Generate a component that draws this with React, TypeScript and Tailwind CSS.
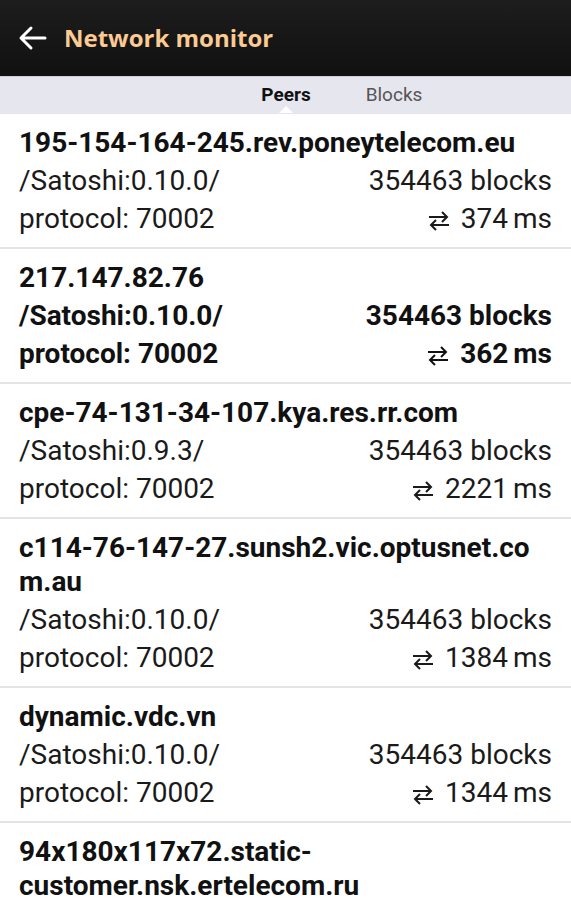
import React from 'react'

type Peer = {
  host: string
  agent?: string
  blocks?: string
  protocol?: string
  ping?: string
  bold?: boolean
  breakAll?: boolean
}

const peers: Peer[] = [
  { host: '195-154-164-245.rev.poneytelecom.eu', agent: '/Satoshi:0.10.0/', blocks: '354463 blocks', protocol: 'protocol: 70002', ping: '374' },
  { host: '217.147.82.76', agent: '/Satoshi:0.10.0/', blocks: '354463 blocks', protocol: 'protocol: 70002', ping: '362', bold: true },
  { host: 'cpe-74-131-34-107.kya.res.rr.com', agent: '/Satoshi:0.9.3/', blocks: '354463 blocks', protocol: 'protocol: 70002', ping: '2221' },
  { host: 'c114-76-147-27.sunsh2.vic.optusnet.com.au', agent: '/Satoshi:0.10.0/', blocks: '354463 blocks', protocol: 'protocol: 70002', ping: '1384', breakAll: true },
  { host: 'dynamic.vdc.vn', agent: '/Satoshi:0.10.0/', blocks: '354463 blocks', protocol: 'protocol: 70002', ping: '1344' },
  { host: '94x180x117x72.static-customer.nsk.ertelecom.ru' },
]

function SwapIcon() {
  return (
    <svg width="24" height="22" viewBox="0 0 24 22" className="mr-[10px] mt-[3px]" fill="none" stroke="currentColor" strokeWidth="2" strokeLinecap="butt" strokeLinejoin="miter">
      <path d="M2 7h18M15 2l5 5-5 5" />
      <path d="M22 15H4M9 10l-5 5 5 5" />
    </svg>
  )
}

function PeerRow({ peer }: { peer: Peer }) {
  const weight = peer.bold ? 'font-bold text-[#111]' : 'font-normal text-[#1a1a1a]'
  return (
    <div className="border-b-2 border-[#e4e4e4] px-[19px] pt-[12px] pb-[11px]">
      <div className={`font-bold text-[28px] leading-[34px] text-[#111] ${peer.breakAll ? 'break-all' : 'break-words'}`}>
        {peer.host}
      </div>
      {peer.agent && (
        <div className={`mt-[4px] flex justify-between text-[28px] leading-[34px] ${weight}`}>
          <span>{peer.agent}</span>
          <span>{peer.blocks}</span>
        </div>
      )}
      {peer.protocol && (
        <div className={`mt-[4px] flex justify-between text-[28px] leading-[34px] ${weight}`}>
          <span>{peer.protocol}</span>
          <span className="flex items-center">
            <SwapIcon />
            {peer.ping}
            <span className="ml-[5px]">ms</span>
          </span>
        </div>
      )}
    </div>
  )
}

export default function App() {
  return (
    <div className="w-[571px] h-[900px] overflow-hidden bg-white" style={{ fontFamily: 'Roboto, "Liberation Sans", sans-serif' }}>
      {/* Action bar */}
      <div className="h-[76px] bg-gradient-to-b from-[#1d1d1d] to-[#111111] flex items-center">
        <svg width="30" height="26" viewBox="0 0 30 26" className="ml-[18px]" fill="none" stroke="white" strokeWidth="3" strokeLinecap="round" strokeLinejoin="round">
          <path d="M27 13H4M13 3L3 13l10 10" />
        </svg>
        <span className="ml-[16px] text-[24px] font-bold text-[#fcca93]" style={{ fontFamily: '"Open Sans", "DejaVu Sans", sans-serif' }}>
          Network monitor
        </span>
      </div>

      {/* Tabs */}
      <div className="h-[38px] bg-[#e6e6ee] border-t border-[#cfcfd6] flex items-center pl-[236px] text-[19px]">
        <div className="relative w-[100px] text-center font-bold text-[#111]">
          Peers
          <div className="absolute left-1/2 -translate-x-1/2 top-[25px] w-0 h-0 border-l-[7px] border-r-[7px] border-b-[7px] border-l-transparent border-r-transparent border-b-white" />
        </div>
        <div className="w-[116px] text-center text-[#555]">Blocks</div>
      </div>

      <div>
        {peers.map((p) => (
          <PeerRow key={p.host} peer={p} />
        ))}
      </div>
    </div>
  )
}
